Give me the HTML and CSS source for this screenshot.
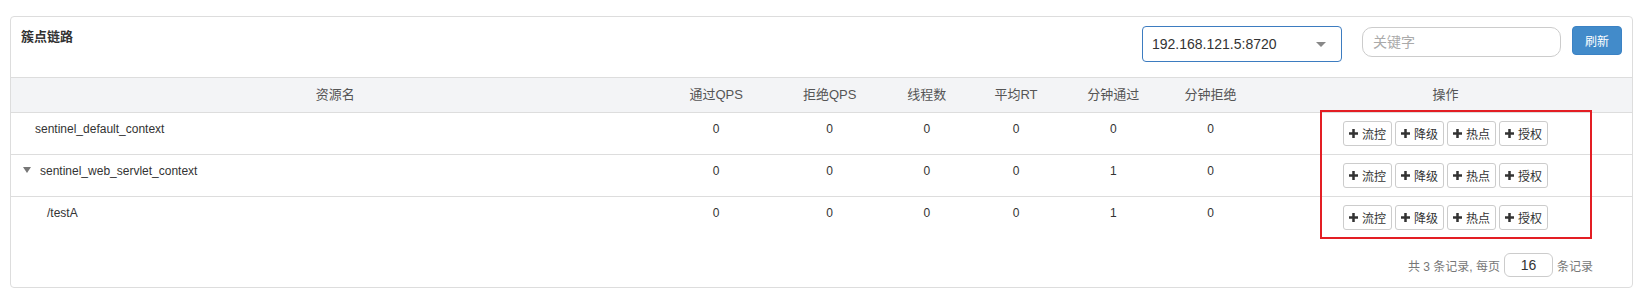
FILE: index.html
```html
<!DOCTYPE html>
<html lang="zh-CN">
<head>
  <meta charset="UTF-8">
  <title>簇点链路</title>
  <link rel="stylesheet" href="styles.css">
</head>
<body>

  <div class="card">
    <div class="topbar">
      <div class="title">簇点链路</div>
      <div class="tools">
        <div class="machine-select">
          <span>192.168.121.5:8720</span>
          <span class="caret"></span>
        </div>
        <input type="text" class="search" placeholder="关键字">
        <button class="btn-refresh">刷新</button>
      </div>
    </div>

    <table class="node-table">
      <colgroup>
        <col style="width: 40%">
        <col style="width: 7%">
        <col style="width: 7%">
        <col style="width: 5%">
        <col style="width: 6%">
        <col style="width: 6%">
        <col style="width: 6%">
        <col style="width: 23%">
      </colgroup>
      <thead>
        <tr>
          <th>资源名</th>
          <th>通过QPS</th>
          <th>拒绝QPS</th>
          <th>线程数</th>
          <th>平均RT</th>
          <th>分钟通过</th>
          <th>分钟拒绝</th>
          <th>操作</th>
        </tr>
      </thead>
      <tbody>
        <tr>
          <td class="name level-0">sentinel_default_context</td>
          <td>0</td><td>0</td><td>0</td><td>0</td><td>0</td><td>0</td>
          <td>
            <div class="ops">
              <button class="btn-op"><svg viewBox="0 0 10 10"><path d="M3.6 0h2.8v3.6H10v2.8H6.4V10H3.6V6.4H0V3.6h3.6z"/></svg>流控</button>
              <button class="btn-op"><svg viewBox="0 0 10 10"><path d="M3.6 0h2.8v3.6H10v2.8H6.4V10H3.6V6.4H0V3.6h3.6z"/></svg>降级</button>
              <button class="btn-op"><svg viewBox="0 0 10 10"><path d="M3.6 0h2.8v3.6H10v2.8H6.4V10H3.6V6.4H0V3.6h3.6z"/></svg>热点</button>
              <button class="btn-op"><svg viewBox="0 0 10 10"><path d="M3.6 0h2.8v3.6H10v2.8H6.4V10H3.6V6.4H0V3.6h3.6z"/></svg>授权</button>
            </div>
          </td>
        </tr>
        <tr>
          <td class="name level-1"><span class="tree-toggle"></span>sentinel_web_servlet_context</td>
          <td>0</td><td>0</td><td>0</td><td>0</td><td>1</td><td>0</td>
          <td>
            <div class="ops">
              <button class="btn-op"><svg viewBox="0 0 10 10"><path d="M3.6 0h2.8v3.6H10v2.8H6.4V10H3.6V6.4H0V3.6h3.6z"/></svg>流控</button>
              <button class="btn-op"><svg viewBox="0 0 10 10"><path d="M3.6 0h2.8v3.6H10v2.8H6.4V10H3.6V6.4H0V3.6h3.6z"/></svg>降级</button>
              <button class="btn-op"><svg viewBox="0 0 10 10"><path d="M3.6 0h2.8v3.6H10v2.8H6.4V10H3.6V6.4H0V3.6h3.6z"/></svg>热点</button>
              <button class="btn-op"><svg viewBox="0 0 10 10"><path d="M3.6 0h2.8v3.6H10v2.8H6.4V10H3.6V6.4H0V3.6h3.6z"/></svg>授权</button>
            </div>
          </td>
        </tr>
        <tr>
          <td class="name level-2">/testA</td>
          <td>0</td><td>0</td><td>0</td><td>0</td><td>1</td><td>0</td>
          <td>
            <div class="ops">
              <button class="btn-op"><svg viewBox="0 0 10 10"><path d="M3.6 0h2.8v3.6H10v2.8H6.4V10H3.6V6.4H0V3.6h3.6z"/></svg>流控</button>
              <button class="btn-op"><svg viewBox="0 0 10 10"><path d="M3.6 0h2.8v3.6H10v2.8H6.4V10H3.6V6.4H0V3.6h3.6z"/></svg>降级</button>
              <button class="btn-op"><svg viewBox="0 0 10 10"><path d="M3.6 0h2.8v3.6H10v2.8H6.4V10H3.6V6.4H0V3.6h3.6z"/></svg>热点</button>
              <button class="btn-op"><svg viewBox="0 0 10 10"><path d="M3.6 0h2.8v3.6H10v2.8H6.4V10H3.6V6.4H0V3.6h3.6z"/></svg>授权</button>
            </div>
          </td>
        </tr>
      </tbody>
    </table>

    <div class="pager">
      共 3 条记录, 每页
      <input type="text" class="page-size" value="16">
      条记录
    </div>

    <div class="highlight"></div>
  </div>

</body>
</html>
```

FILE: styles.css
```css
body {
  margin: 0;
  padding: 16px 11px 0 10px;
  font-family: "Liberation Sans", Arial, "Noto Sans CJK SC", sans-serif;
  font-size: 12px;
  color: #333;
  background-color: #fff;
}

.card {
  position: relative;
  height: 272px;
  box-sizing: border-box;
  border: 1px solid #ddd;
  border-radius: 4px;
  background: white;
}

.topbar {
  display: flex;
  justify-content: space-between;
  padding: 9px 10px 15px 10px;
}

.title {
  margin-top: 2px;
  font-size: 13px;
  line-height: 18px;
  font-weight: bold;
  color: #333;
}

.tools {
  display: flex;
  align-items: flex-start;
}

.machine-select {
  display: flex;
  align-items: center;
  justify-content: space-between;
  width: 200px;
  height: 36px;
  box-sizing: border-box;
  padding: 0 15px 0 9px;
  border: 1px solid #3d7cc0;
  border-radius: 4px;
  font-size: 14px;
  color: #333;
}

.caret {
  width: 0;
  height: 0;
  border-left: 5px solid transparent;
  border-right: 5px solid transparent;
  border-top: 5px solid #888;
}

.search {
  width: 199px;
  height: 30px;
  box-sizing: border-box;
  margin: 1px 0 0 20px;
  padding: 0 10px;
  border: 1px solid #ccc;
  border-radius: 10px;
  font-family: inherit;
  font-size: 14px;
  outline: none;
}

.search::placeholder {
  color: #aaa;
}

.btn-refresh {
  width: 50px;
  height: 29px;
  margin-left: 11px;
  padding: 0;
  border: 1px solid #3b82c4;
  border-radius: 4px;
  background-color: #428bca;
  color: #fff;
  font-family: inherit;
  font-size: 12px;
}

.node-table {
  width: 100%;
  border-collapse: collapse;
  table-layout: fixed;
}

.node-table th {
  padding: 8px;
  font-size: 13px;
  line-height: 18px;
  font-weight: normal;
  color: #555;
  background-color: #f3f4f6;
  border-top: 1px solid #ddd;
  border-bottom: 1px solid #ddd;
  text-align: center;
}

.node-table td {
  padding: 8px;
  line-height: 17px;
  vertical-align: top;
  text-align: center;
  border-top: 1px solid #ddd;
}

.node-table td.name {
  text-align: left;
}

.level-0 {
  padding-left: 24px !important;
}

.level-1 {
  padding-left: 12px !important;
}

.level-2 {
  padding-left: 36px !important;
}

.tree-toggle {
  display: inline-block;
  width: 0;
  height: 0;
  margin-right: 9px;
  vertical-align: 2px;
  border-left: 4px solid transparent;
  border-right: 4px solid transparent;
  border-top: 6px solid #777;
}

.ops {
  display: flex;
  justify-content: center;
  gap: 3px;
}

.btn-op {
  display: inline-flex;
  align-items: center;
  justify-content: center;
  width: 49px;
  height: 25px;
  padding: 0;
  border: 1px solid #ccc;
  border-radius: 3px;
  background: #fff;
  color: #333;
  font-family: inherit;
  font-size: 12px;
}

.btn-op svg {
  width: 9px;
  height: 9px;
  margin-right: 4px;
  fill: #333;
}

.pager {
  display: flex;
  align-items: center;
  justify-content: flex-end;
  gap: 4px;
  margin-top: 15px;
  padding-right: 39px;
  color: #777;
  font-size: 12px;
}

.page-size {
  width: 49px;
  height: 24px;
  box-sizing: border-box;
  border: 1px solid #ccc;
  border-radius: 6px;
  text-align: center;
  font-family: inherit;
  font-size: 14px;
  color: #333;
}

.highlight {
  position: absolute;
  left: 1309px;
  top: 93px;
  width: 272px;
  height: 129px;
  box-sizing: border-box;
  border: 2px solid #e31e24;
}
```
